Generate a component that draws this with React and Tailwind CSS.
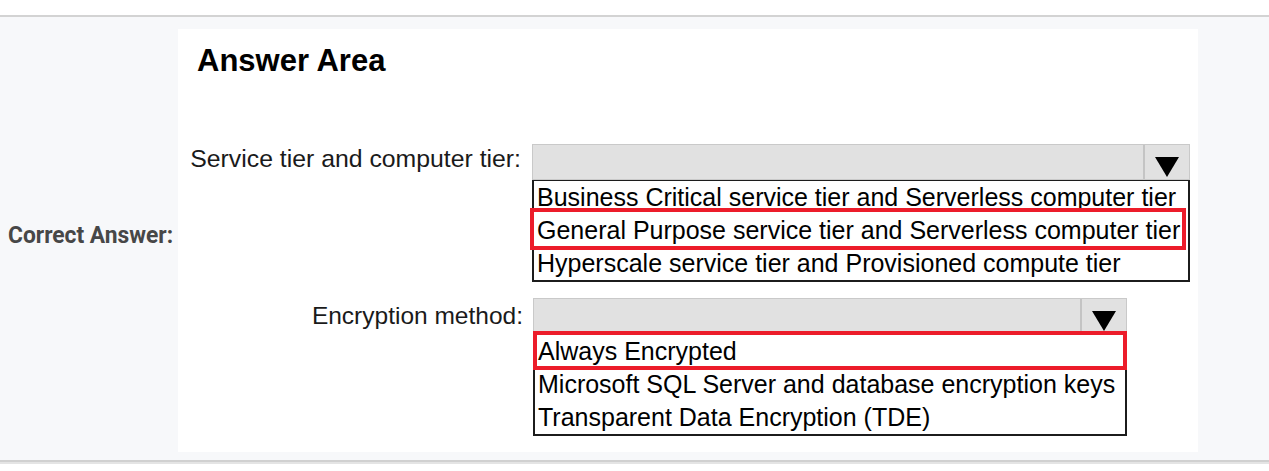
import React from 'react';

const Arrow = () => (
  <svg width="24" height="20" viewBox="0 0 24 20" className="block">
    <polygon points="0,0 24,0 12,20" fill="#000" />
  </svg>
);

const Dropdown = ({ width, options, redBox }) => (
  <div className={`flex flex-col ${width}`}>
    <div className="flex h-[36px] border border-[#c9c9c9] bg-[#e1e1e1]">
      <div className="flex-1" />
      <div className="flex w-[46px] items-end justify-center border-l-2 border-[#c4c4c4] pb-[2px]">
        <Arrow />
      </div>
    </div>
    <div className="relative border-2 border-t-[1.5px] border-[#1c1c1c] bg-white">
      {options.map((opt, idx) => (
        <div key={idx} className="pl-[3px] text-[25px] leading-[33px] whitespace-nowrap text-black">
          {opt}
        </div>
      ))}
      <div className={`absolute border-4 border-[#ec1c2a] ${redBox}`} />
    </div>
  </div>
);

export default function App() {
  const font = { fontFamily: '"Liberation Sans", Arial, sans-serif' };

  return (
    <div className="w-[1269px] h-[471px] bg-white" style={font}>
      <div className="h-[15px] bg-white" />
      <div className="h-[2px] bg-[#d3d3d3]" />
      <div className="flex h-[443px] bg-[#f7f8fa]">
        <div className="flex w-[178px] items-center pl-[8px] pb-[8px]">
          <span
            className="inline-block origin-left scale-x-[0.95] whitespace-nowrap text-[24px] font-bold text-[#474747]"
            style={{ fontFamily: 'Roboto, "Liberation Sans", sans-serif' }}
          >
            Correct Answer:
          </span>
        </div>
        <div className="mt-[12px] h-[423px] w-[1020px] bg-white">
          <h2 className="pl-[19px] pt-[15px] text-[31px] leading-[34px] font-bold text-black">Answer Area</h2>

          <div className="mt-[66px] flex items-start">
            <div className="w-[343px] text-right text-[24.8px] leading-[29px] whitespace-nowrap text-[#1a1a1a]">
              Service tier and computer tier:
            </div>
            <div className="ml-[11px]">
              <Dropdown
                width="w-[658px]"
                options={[
                  'Business Critical service tier and Serverless computer tier',
                  'General Purpose service tier and Serverless computer tier',
                  'Hyperscale service tier and Provisioned compute tier',
                ]}
                redBox="left-[-4px] top-[27px] w-[656px] h-[42px]"
              />
            </div>
          </div>

          <div className="mt-[16px] flex items-start">
            <div className="mt-[3px] w-[345px] text-right text-[24.5px] leading-[29px] whitespace-nowrap text-[#1a1a1a]">
              Encryption method:
            </div>
            <div className="ml-[10px]">
              <Dropdown
                width="w-[594px]"
                options={[
                  'Always Encrypted',
                  'Microsoft SQL Server and database encryption keys',
                  'Transparent Data Encryption (TDE)',
                ]}
                redBox="left-[-2px] top-[-4px] w-[594px] h-[39px]"
              />
            </div>
          </div>
        </div>
        <div className="flex-1" />
      </div>
      <div className="h-[2px] bg-[#d0d0d0]" />
      <div className="h-[2px] bg-[#e4e4e4]" />
    </div>
  );
}
